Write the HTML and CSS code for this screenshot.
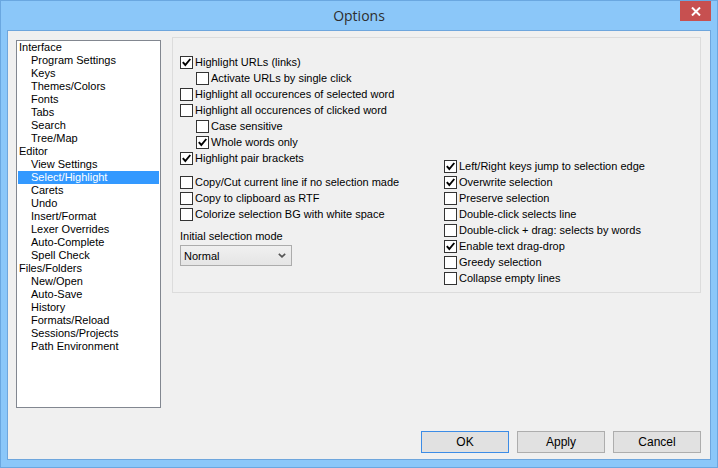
FILE: index.html
```html
<!DOCTYPE html>
<html>
<head>
<meta charset="utf-8">
<link rel="stylesheet" href="styles.css">
</head>
<body>
<div class="window">
  <div class="titlebar">
    <span class="title">Options</span>
    <div class="close"><svg width="10" height="9" viewBox="0 0 10 9"><path d="M1 0.5 L9 8.5 M9 0.5 L1 8.5" stroke="#fff" stroke-width="2"/></svg></div>
  </div>
  <div class="client">
    <div class="main">
      <div class="tree">
        <div class="node">Interface</div>
        <div class="node child">Program Settings</div>
        <div class="node child">Keys</div>
        <div class="node child">Themes/Colors</div>
        <div class="node child">Fonts</div>
        <div class="node child">Tabs</div>
        <div class="node child">Search</div>
        <div class="node child">Tree/Map</div>
        <div class="node">Editor</div>
        <div class="node child">View Settings</div>
        <div class="node child selected">Select/Highlight</div>
        <div class="node child">Carets</div>
        <div class="node child">Undo</div>
        <div class="node child">Insert/Format</div>
        <div class="node child">Lexer Overrides</div>
        <div class="node child">Auto-Complete</div>
        <div class="node child">Spell Check</div>
        <div class="node">Files/Folders</div>
        <div class="node child">New/Open</div>
        <div class="node child">Auto-Save</div>
        <div class="node child">History</div>
        <div class="node child">Formats/Reload</div>
        <div class="node child">Sessions/Projects</div>
        <div class="node child">Path Environment</div>
      </div>
      <div class="group">
        <div class="col left">
          <div class="block">
            <div class="row"><span class="cb on"><svg width="11" height="11" viewBox="0 0 11 11"><path d="M1.8 5.2 L4.3 8 L9.3 2" fill="none" stroke="#000" stroke-width="1.9"/></svg></span>Highlight URLs (links)</div>
            <div class="row sub"><span class="cb"></span>Activate URLs by single click</div>
            <div class="row"><span class="cb"></span>Highlight all occurences of selected word</div>
            <div class="row"><span class="cb"></span>Highlight all occurences of clicked word</div>
            <div class="row sub"><span class="cb"></span>Case sensitive</div>
            <div class="row sub"><span class="cb on"><svg width="11" height="11" viewBox="0 0 11 11"><path d="M1.8 5.2 L4.3 8 L9.3 2" fill="none" stroke="#000" stroke-width="1.9"/></svg></span>Whole words only</div>
            <div class="row"><span class="cb on"><svg width="11" height="11" viewBox="0 0 11 11"><path d="M1.8 5.2 L4.3 8 L9.3 2" fill="none" stroke="#000" stroke-width="1.9"/></svg></span>Highlight pair brackets</div>
          </div>
          <div class="block second">
            <div class="row"><span class="cb"></span>Copy/Cut current line if no selection made</div>
            <div class="row"><span class="cb"></span>Copy to clipboard as RTF</div>
            <div class="row"><span class="cb"></span>Colorize selection BG with white space</div>
          </div>
          <div class="label">Initial selection mode</div>
          <div class="select"><span>Normal</span><svg width="8" height="5" viewBox="0 0 8 5"><path d="M0.8 0.8 L4 3.8 L7.2 0.8" fill="none" stroke="#555" stroke-width="1.6"/></svg></div>
        </div>
        <div class="col right">
          <div class="row"><span class="cb on"><svg width="11" height="11" viewBox="0 0 11 11"><path d="M1.8 5.2 L4.3 8 L9.3 2" fill="none" stroke="#000" stroke-width="1.9"/></svg></span>Left/Right keys jump to selection edge</div>
          <div class="row"><span class="cb on"><svg width="11" height="11" viewBox="0 0 11 11"><path d="M1.8 5.2 L4.3 8 L9.3 2" fill="none" stroke="#000" stroke-width="1.9"/></svg></span>Overwrite selection</div>
          <div class="row"><span class="cb"></span>Preserve selection</div>
          <div class="row"><span class="cb"></span>Double-click selects line</div>
          <div class="row"><span class="cb"></span>Double-click + drag: selects by words</div>
          <div class="row"><span class="cb on"><svg width="11" height="11" viewBox="0 0 11 11"><path d="M1.8 5.2 L4.3 8 L9.3 2" fill="none" stroke="#000" stroke-width="1.9"/></svg></span>Enable text drag-drop</div>
          <div class="row"><span class="cb"></span>Greedy selection</div>
          <div class="row"><span class="cb"></span>Collapse empty lines</div>
        </div>
      </div>
    </div>
    <div class="buttons">
      <div class="btn default">OK</div>
      <div class="btn">Apply</div>
      <div class="btn">Cancel</div>
    </div>
  </div>
</div>
</body>
</html>
```
FILE: styles.css
```css
* { box-sizing: border-box; }
html, body { margin: 0; padding: 0; }
body {
  width: 718px;
  height: 468px;
  overflow: hidden;
  font-family: "Liberation Sans", Arial, sans-serif;
  font-size: 11px;
  color: #000;
}
.window {
  width: 718px;
  height: 468px;
  background: #8bc7f9;
  border: 1px solid #6aa7e0;
  padding: 0 6px 7px 6px;
  display: flex;
  flex-direction: column;
}
.titlebar {
  height: 29px;
  position: relative;
  display: flex;
  align-items: center;
  justify-content: center;
}
.title {
  font-family: "Open Sans", "Noto Sans", sans-serif;
  font-size: 14px;
  color: #2e2e2e;
  margin-top: 0px;
}
.close {
  position: absolute;
  top: 0;
  right: 0;
  width: 31px;
  height: 20px;
  background: #c75050;
  display: flex;
  align-items: center;
  justify-content: center;
}
.client {
  flex: 1;
  background: #f0f0f0;
  border: 1px solid #6ea6dd;
  display: flex;
  flex-direction: column;
}
.main {
  flex: 1;
  display: flex;
  align-items: flex-start;
  padding: 6px 9px 0 8px;
  gap: 11px;
}
.tree {
  width: 145px;
  height: 368px;
  margin-top: 3px;
  background: #fff;
  border: 1px solid #828790;
  padding-top: 0;
}
.node {
  height: 13px;
  line-height: 13px;
  padding-left: 2px;
  white-space: nowrap;
}
.node.child { padding-left: 14px; }
.node.selected {
  background: #3399ff;
  color: #fff;
  margin: 0 1px;
  padding-left: 13px;
}
.group {
  flex: 1;
  height: 256px;
  border: 1px solid #dcdcdc;
  padding: 16px 7px;
  display: flex;
}
.col.left { width: 264px; }
.col.right { padding-top: 104px; }
.row {
  height: 16px;
  display: flex;
  align-items: center;
  white-space: nowrap;
}
.row.sub { padding-left: 16px; }
.cb {
  width: 13px;
  height: 13px;
  border: 1px solid #333;
  background: #fff;
  margin-right: 2px;
  flex: none;
  display: flex;
}
.block.second { margin-top: 8px; }
.label {
  margin-top: 6px;
  height: 16px;
  line-height: 16px;
}
.select {
  margin-top: 1px;
  width: 112px;
  height: 21px;
  border: 1px solid #acacac;
  background: linear-gradient(#f0f0f0, #e5e5e5);
  display: flex;
  align-items: center;
  justify-content: space-between;
  padding: 0 5px 0 3px;
}
.buttons {
  display: flex;
  justify-content: flex-end;
  gap: 8px;
  padding: 0 9px 6px 0;
}
.btn {
  width: 88px;
  height: 22px;
  border: 1px solid #adadad;
  background: #e1e1e1;
  display: flex;
  align-items: center;
  justify-content: center;
  font-size: 12px;
}
.btn.default { border-color: #3c8ce6; }
```
